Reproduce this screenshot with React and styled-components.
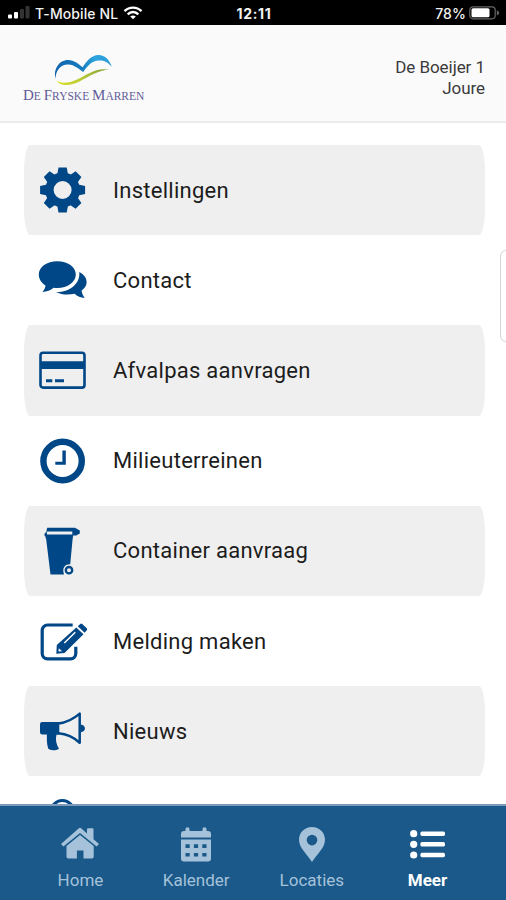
import styled, { createGlobalStyle } from "styled-components";

const colors = {
  main: "#004787",
  nav: "#1a5989",
  navText: "#a5c2da",
  row: "#efefef",
  text: "#1c1c1c",
};

const GearIcon = () => (
  <Icon viewBox="0 0 50 50">
    <circle cx="24.6" cy="25" r="13.2" fill="none" stroke={colors.main} strokeWidth="8.4" />
    {[0, 45, 90, 135, 180, 225, 270, 315].map(angle => (
      <path key={angle} transform={`rotate(${angle} 24.6 25)`} d="M20.5 2.5h8.2l1.3 7h-10.8z" />
    ))}
  </Icon>
);

const CommentsIcon = () => (
  <Icon viewBox="0 0 50 50">
    <path d="M19.3 6.3C29.8 6.3 37.8 12 37.8 19.6S29.8 33 19.3 33c-1.3 0-2.5-.1-3.7-.3-3.1 2.6-6.6 3.9-11.2 4.2 1.7-1.8 2.8-3.8 3.1-6.3C3.4 28.1 .8 24 .8 19.6 .8 12 8.8 6.3 19.3 6.3z" />
    <path d="M41.3 17C46 19.3 48.7 23 48.6 27.3c0 3.3-1.9 6.1-5 8.1.3 2.9 1.4 5 3.2 7.5-4.4-.1-7.5-1.6-10.2-4.1-6.9 1.6-13.6.8-18.6-1.8C30 37.5 42.5 30 41.3 17z" />
  </Icon>
);

const CardIcon = () => (
  <Icon viewBox="0 0 50 50">
    <rect x="2.5" y="7.8" width="44" height="34.8" rx="2.6" fill="none" stroke={colors.main} strokeWidth="2.6" />
    <path d="M2 16.3h45V24H2zM8 34.3h6.3v2.9H8zM17 34.3h9v2.9h-9z" />
  </Icon>
);

const ClockIcon = () => (
  <Icon viewBox="0 0 50 50">
    <circle cx="24.6" cy="25" r="19.2" fill="none" stroke={colors.main} strokeWidth="6.4" />
    <path d="M24.4 14.5h3.4v14.2H17.3v-2.9h7.1z" />
  </Icon>
);

const BinIcon = () => (
  <Icon viewBox="0 0 50 50">
    <path fillRule="evenodd" d="M9.2 1.8H37l4.8 2.6v3L38.2 9.4H35.2L34.4 12.5H7.8L7.2 10 6.5 9.8V7.8L8.2 6zM8.9 5.4v3.2H34.3V5.4z" />
    <path d="M7.9 11H34.8L32.2 38.4C28 38 25 41 25.3 45.2L26 48.5H12.5z" />
    <circle cx="31" cy="44.2" r="3.2" fill="none" stroke={colors.main} strokeWidth="2.3" />
  </Icon>
);

const EditIcon = () => (
  <Icon viewBox="0 0 50 50">
    <path
      fill="none"
      stroke={colors.main}
      strokeWidth="3.2"
      d="M34.7 9H9.5a5.3 5.3 0 0 0-5.3 5.3v23.2a5.3 5.3 0 0 0 5.3 5.3h23a5.3 5.3 0 0 0 5.3-5.3V30.8"
    />
    <path fillRule="evenodd" d="M38.3 11.5L45.5 18.2 26.5 37 18.3 37.7 18.8 28.9zM20.8 32.2L20.5 35.6 24 35.2zM25.8 26.6l1 1L37.8 16.8l-1-1z" />
    <path d="M39.8 10.3L42.2 7.9q1-.9 2 0l4.6 4.4q.9 1 0 2L46.6 16.8z" />
  </Icon>
);

const MegaphoneIcon = () => (
  <Icon viewBox="0 0 50 50">
    <path d="M4.2 16H21.3V28.7H18.5C17.3 33 18 38 21 42.7 17.5 45 12 44.7 10.2 42.6 8.7 38 8.8 33 8.9 28.5H4.2Q2 28.5 2 26.3V18.2Q2 16 4.2 16z" />
    <path
      fill="none"
      stroke={colors.main}
      strokeWidth="2.5"
      strokeLinejoin="round"
      d="M20.5 17.5C29 16.5 36 12.5 41.7 7.6V36.8C36 31.5 29 28 20.5 27.3"
    />
    <path d="M42.8 18.6C45.2 18.8 46.9 20.3 46.9 22.5S45.2 26 42.8 26.2z" />
  </Icon>
);

const QuestionIcon = () => (
  <Icon viewBox="0 0 50 50">
    <circle cx="24.4" cy="16.2" r="11.6" fill="none" stroke={colors.main} strokeWidth="3" />
  </Icon>
);

const HomeIcon = () => (
  <NavIcon viewBox="0 0 40 36">
    <path d="M18.6 1.4q1.4-1.1 2.8 0L27 6.4V2.3q0-1 1-1H32.5q1 0 1 1V12.2L39 16.9 36.6 19.6 20 5.9 3.4 19.6 1 16.9z" />
    <path d="M20 7.9L33.7 19V29.8q0 1.7-1.7 1.7H23.5V23.6H16.9V31.5H8.2q-1.7 0-1.7-1.7V19z" />
  </NavIcon>
);

const CalendarIcon = () => (
  <NavIcon viewBox="0 0 40 36">
    <path d="M11.5.3q2 0 2 1.8V4H26.5V2.1q0-1.8 2-1.8t2 1.8V4H32q3 0 3 3V10.5H5V7q0-3 3-3H9.5V2.1q0-1.8 2-1.8z" />
    <path
      fillRule="evenodd"
      d="M5 12.6H35V31.6Q35 34.6 32 34.6H8Q5 34.6 5 31.6zM9.5 17.3v3.6h4.2v-3.6zM17.9 17.3v3.6h4.2v-3.6zM26.3 17.3v3.6h4.2v-3.6zM9.5 25.9v3.6h4.2v-3.6zM17.9 25.9v3.6h4.2v-3.6zM26.3 25.9v3.6h4.2v-3.6z"
    />
  </NavIcon>
);

const PinIcon = () => (
  <NavIcon viewBox="0 0 40 36">
    <path fillRule="evenodd" d="M20 0C27.4 0 33 5.6 33 12.8 33 21 24.7 27.5 20 35 15.3 27.5 7 21 7 12.8 7 5.6 12.6 0 20 0zM20 7.8a5.3 5.3 0 1 0 0 10.6 5.3 5.3 0 0 0 0-10.6z" />
  </NavIcon>
);

const ListIcon = () => (
  <NavIcon viewBox="0.6 0 40 36">
    {[6.7, 17.3, 28].map(y => (
      <g key={y}>
        <circle cx="6.3" cy={y} r="3.6" />
        <rect x="13" y={y - 2.2} width="24.6" height="4.4" rx="1.6" />
      </g>
    ))}
  </NavIcon>
);

const menuItems = [
  { title: "Instellingen", icon: <GearIcon /> },
  { title: "Contact", icon: <CommentsIcon /> },
  { title: "Afvalpas aanvragen", icon: <CardIcon /> },
  { title: "Milieuterreinen", icon: <ClockIcon /> },
  { title: "Container aanvraag", icon: <BinIcon /> },
  { title: "Melding maken", icon: <EditIcon /> },
  { title: "Nieuws", icon: <MegaphoneIcon /> },
  { title: "", icon: <QuestionIcon /> },
];

const navItems = [
  { title: "Home", icon: <HomeIcon /> },
  { title: "Kalender", icon: <CalendarIcon /> },
  { title: "Locaties", icon: <PinIcon /> },
  { title: "Meer", icon: <ListIcon />, active: true },
];

const App = () => (
  <>
    <GlobalStyle />
    <Screen>
      <StatusBar>
        <Carrier>
          <svg width="22" height="14" viewBox="0 0 22 14" fill="#fff">
            <rect x="0" y="8.5" width="4" height="4" rx="1" />
            <rect x="6" y="6" width="4" height="6.5" rx="1" />
            <rect x="12" y="3" width="4" height="9.5" rx="1" opacity=".2" />
            <rect x="17.5" y="0" width="4" height="12.5" rx="1" opacity=".2" />
          </svg>
          <StatusText>T-Mobile NL</StatusText>
          <svg width="20" height="14" viewBox="0 0 20 14" fill="none" stroke="#fff" strokeWidth="2.4">
            <path d="M1.5 5.2C6.3.4 13.7.4 18.5 5.2M4.7 8.3c3-3 7.6-3 10.6 0" />
            <path d="M10 13.3L7.2 10.5q2.8-2.2 5.6 0z" fill="#fff" stroke="none" />
          </svg>
        </Carrier>
        <Time>12:11</Time>
        <Battery>
          <StatusText>78%</StatusText>
          <svg width="31" height="14" viewBox="0 0 31 14">
            <rect x=".8" y=".8" width="25.4" height="12" rx="3.2" fill="none" stroke="#666" strokeWidth="1.2" />
            <rect x="2.5" y="2.3" width="18" height="9" rx="1.5" fill="#fff" />
            <path d="M27.8 4.2q2.4 1 2.4 2.6t-2.4 2.6z" fill="#666" />
          </svg>
        </Battery>
      </StatusBar>
      <Header>
        <Logo>
          <LogoMark viewBox="53 53 60 34">
            <defs>
              <linearGradient id="wave" x1="0" x2="1">
                <stop offset="0" stopColor="#1265ad" />
                <stop offset=".45" stopColor="#1478bd" />
                <stop offset=".7" stopColor="#2fa4dc" />
                <stop offset="1" stopColor="#2b9ad6" />
              </linearGradient>
              <linearGradient id="shore" x1="0" x2="1">
                <stop offset="0" stopColor="#dbe21c" />
                <stop offset=".45" stopColor="#bccb35" />
                <stop offset="1" stopColor="#7c9f3c" />
              </linearGradient>
            </defs>
            <path fill="url(#wave)" d="M55.6 78.5C53 69 59.5 60 68 60.1 74.5 60.2 78.5 64 82.5 67.3 86.5 61.5 91 55 98.5 54.9 105 54.9 110 60.5 111.7 66.8 107.5 61.5 103 59.9 98 60.5 91.5 61.2 87.5 66 83.2 72 78.5 69 74.5 64.9 68.5 64.6 61 64.2 55.8 70 55.6 78.5z" />
            <path fill="url(#shore)" d="M56.5 80.5C62 84.5 70 82.8 77 79.5 87 74.8 96 67 109.3 69.7 98 70 90 76 80.5 80.9 71 86 60.5 87 56.5 80.5z" />
          </LogoMark>
          <LogoText>
            <b>D</b>E <b>F</b>RYSKE <b>M</b>ARREN
          </LogoText>
        </Logo>
        <Address>
          De Boeijer 1<br />
          Joure
        </Address>
      </Header>
      <Content>
        <MenuList>
          {menuItems.map(({ title, icon }, index) => (
            <MenuItem key={index} $filled={index % 2 === 0}>
              {icon}
              <MenuTitle>{title}</MenuTitle>
            </MenuItem>
          ))}
        </MenuList>
        <SideHandle />
      </Content>
      <NavBar>
        {navItems.map(({ title, icon, active }) => (
          <NavItem key={title} $active={active}>
            {icon}
            <NavTitle>{title}</NavTitle>
          </NavItem>
        ))}
      </NavBar>
    </Screen>
  </>
);

export default App;

const GlobalStyle = createGlobalStyle`
  body {
    margin: 0;
    background: #fff;
    font-family: Roboto, "Liberation Sans", sans-serif;
  }
`;

const Screen = styled.div`
  display: flex;
  flex-direction: column;
  width: 506px;
  height: 900px;
  overflow: hidden;
`;

const StatusBar = styled.div`
  box-sizing: border-box;
  flex: none;
  display: grid;
  grid-template-columns: 1fr auto 1fr;
  align-items: center;
  height: 25px;
  padding: 1px 6px 0 8px;
  background: #000;
  color: #f2f2f2;
  font-family: Inter, "Liberation Sans", sans-serif;
`;

const Carrier = styled.div`
  display: flex;
  align-items: center;
  gap: 5px;
`;

const Battery = styled(Carrier)`
  justify-content: flex-end;
  gap: 3px;
`;

const StatusText = styled.span`
  font-size: 14px;
  font-weight: 500;
  letter-spacing: 0.1px;
  white-space: nowrap;
`;

const Time = styled(StatusText)`
  font-weight: 700;
  letter-spacing: 0.7px;
`;

const Header = styled.header`
  box-sizing: border-box;
  flex: none;
  display: flex;
  justify-content: space-between;
  height: 98px;
  padding: 28px 21px 0 23px;
  background: #fafafa;
  border-bottom: 2px solid #ebebeb;
`;

const Logo = styled.div`
  width: 122px;
`;

const LogoMark = styled.svg`
  display: block;
  width: 60px;
  height: 34px;
  margin-left: 30px;
`;

const LogoText = styled.div`
  margin-top: 1px;
  font-family: "Liberation Serif", serif;
  font-size: 11.5px;
  line-height: 15px;
  color: #625c98;
  white-space: nowrap;

  b {
    font-size: 15px;
    font-weight: 400;
  }
`;

const Address = styled.div`
  padding-top: 4px;
  font-size: 17px;
  line-height: 21px;
  letter-spacing: -0.05px;
  text-align: right;
  color: #3a3a3a;
`;

const Content = styled.main`
  position: relative;
  flex: 1;
  min-height: 0;
  overflow: hidden;
`;

const MenuList = styled.ul`
  list-style: none;
  margin: 0;
  padding: 22px 21px 0 24px;
`;

const MenuItem = styled.li`
  box-sizing: border-box;
  display: flex;
  align-items: center;
  gap: 25px;
  height: 90.2px;
  padding-left: 14px;
  border-radius: 6px / 27px;
  background: ${({ $filled }) => ($filled ? colors.row : "transparent")};
`;

const Icon = styled.svg`
  flex: none;
  width: 50px;
  height: 50px;
  fill: ${colors.main};
`;

const MenuTitle = styled.span`
  font-size: 22px;
  letter-spacing: 0.27px;
  color: ${colors.text};
`;

/* edge of the drawer that peeks in from the right */
const SideHandle = styled.div`
  position: absolute;
  top: 127px;
  right: -12px;
  width: 16px;
  height: 90px;
  border: 1px solid #d6d6d6;
  border-radius: 6px;
  background: #fff;
`;

const NavBar = styled.nav`
  box-sizing: border-box;
  flex: none;
  display: grid;
  grid-template-columns: repeat(4, 115.7px);
  justify-content: center;
  height: 96px;
  padding-top: 21px;
  padding-left: 2px;
  border-top: 2px solid #7b9bb9;
  background: ${colors.nav};
`;

const NavItem = styled.div`
  display: flex;
  flex-direction: column;
  align-items: center;
  gap: 7px;
  color: ${({ $active }) => ($active ? "#fff" : colors.navText)};
  font-weight: ${({ $active }) => ($active ? 700 : 400)};
`;

const NavIcon = styled.svg`
  width: 40px;
  height: 36px;
  fill: currentColor;
`;

const NavTitle = styled.span`
  font-size: 17px;
  line-height: 20px;
`;
